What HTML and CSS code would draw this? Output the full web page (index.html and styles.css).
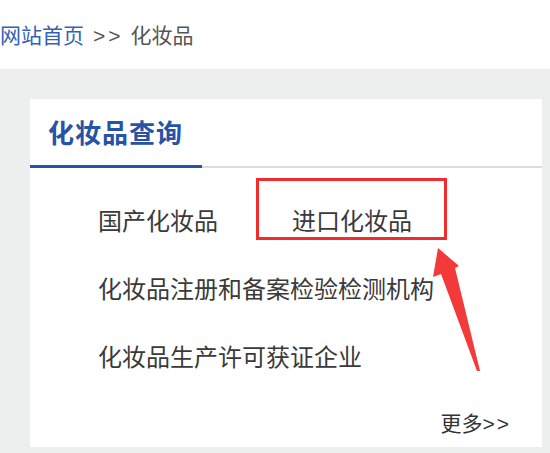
FILE: index.html
```html
<!DOCTYPE html>
<html>
	<head>
		<meta charset="utf-8">
		<title>化妆品</title>
		<link rel="stylesheet" href="styles.css">
	</head>
	<body>
		<div class="page">
			<div class="dqwz">
				<a href="#" class="sy">网站首页</a><span class="jt">&gt;&gt;</span><span>化妆品</span>
			</div>
			<div class="nr">
				<div class="hzp">
					<div class="hzp_bt">
						<h2>化妆品查询</h2>
					</div>
					<div class="hzp_lb">
						<div class="hang">
							<a href="#" class="lj lj1">国产化妆品</a>
							<a href="#" class="lj">进口化妆品</a>
						</div>
						<div class="hang">
							<a href="#" class="lj">化妆品注册和备案检验检测机构</a>
						</div>
						<div class="hang">
							<a href="#" class="lj">化妆品生产许可获证企业</a>
						</div>
					</div>
					<div class="gd"><a href="#">更多<span class="jt">&gt;&gt;</span></a></div>
				</div>
			</div>
			<!-- 标注 -->
			<svg class="bz" width="550" height="453" viewBox="0 0 550 453">
				<rect x="257.5" y="179.5" width="188" height="59" fill="none" stroke="#f22c2c" stroke-width="3"/>
				<polygon points="438,248 459,266 455,268 480,371 477,371 441,274 433,277" fill="#f23a3a"/>
			</svg>
		</div>
	</body>
</html>
```

FILE: styles.css
```css
* {
	margin: 0;
	padding: 0;
}

html,body{
	height: 100%;
	background: #fff;
	font-family: "Noto Sans CJK SC", "Liberation Sans", sans-serif;
	color: #333;
}

a {
	text-decoration: none;
	color: #333;
}

.page {
	position: relative;
	height: 453px;
	overflow: hidden;
}

.dqwz {
	height: 69px;
	line-height: 69px;
	font-size: 21px;
	color: #555;
}

.dqwz .sy {
	color: #3462b4;
}

.jt {
	font-family: "Liberation Sans", sans-serif;
	letter-spacing: 3px;
}

.dqwz .jt {
	margin: 0 7px 0 9px;
}

.nr {
	background-color: #edeeee;
	padding: 30px 8px 6px 30px;
	height: 100%;
}

.hzp {
	background-color: #fff;
	height: 348px;
}

.hzp_bt {
	display: flex;
	border-bottom: 2px solid #dcdcdc;
}

.hzp_bt h2 {
	width: 154px;
	height: 66px;
	line-height: 66px;
	padding-left: 18px;
	font-size: 26px;
	letter-spacing: 1px;
	font-weight: 700;
	color: #2753a7;
	border-bottom: 3px solid #2753a7;
	margin-bottom: -2px;
}

.hzp_lb {
	padding: 18px 0 0 68px;
}

.hang {
	display: flex;
	gap: 74px;
	height: 68px;
	line-height: 68px;
}

.lj {
	font-size: 24px;
	color: #3a3a3a;
}

.gd {
	text-align: right;
	padding-right: 31px;
	margin-top: 12px;
	line-height: 40px;
}

.gd a {
	font-size: 21px;
	color: #333;
}

.gd .jt {
	letter-spacing: 2px;
}

.bz {
	position: absolute;
	left: 0;
	top: 0;
	pointer-events: none;
}
```
